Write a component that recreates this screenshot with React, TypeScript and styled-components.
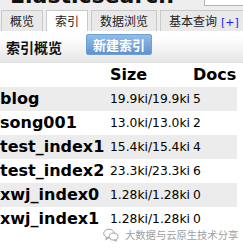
import styled, { createGlobalStyle } from "styled-components";

const GlobalStyle = createGlobalStyle`
  html, body {
    margin: 0;
    padding: 0;
    background: #ffffff;
    overflow: hidden;
  }
  body {
    font-family: "DejaVu Sans", "Noto Sans CJK SC", sans-serif;
    color: #000;
  }
`;

const indices = [
  { name: "blog", size: "19.9ki/19.9ki", docs: "5" },
  { name: "song001", size: "13.0ki/13.0ki", docs: "2" },
  { name: "test_index1", size: "15.4ki/15.4ki", docs: "4" },
  { name: "test_index2", size: "23.3ki/23.3ki", docs: "6" },
  { name: "xwj_index0", size: "1.28ki/1.28ki", docs: "0" },
  { name: "xwj_index1", size: "1.28ki/1.28ki", docs: "0" },
];

const tabs = [
  { label: "概览" },
  { label: "索引", active: true },
  { label: "数据浏览" },
  { label: "基本查询", extra: "[+]" },
];

export default function App() {
  return (
    <Page>
      <GlobalStyle />
      <Header>
        <TitleRow>
          <Title>Elasticsearch</Title>
          <Search />
        </TitleRow>
        <Tabs>
          {tabs.map((t) => (
            <Tab key={t.label} $active={t.active}>
              {t.label}
              {t.extra && <TabExtra>{t.extra}</TabExtra>}
            </Tab>
          ))}
        </Tabs>
      </Header>
      <Toolbar>
        <ToolbarTitle>索引概览</ToolbarTitle>
        <Button>新建索引</Button>
      </Toolbar>
      <Table>
        <HeadRow>
          <span />
          <HeadCell>Size</HeadCell>
          <HeadCell>Docs</HeadCell>
        </HeadRow>
        {indices.map((ix, i) => (
          <Row key={ix.name} $striped={i % 2 === 0}>
            <Name>{ix.name}</Name>
            <Cell>{ix.size}</Cell>
            <Cell>{ix.docs}</Cell>
          </Row>
        ))}
      </Table>
      <Watermark>
        <svg width="16" height="14" viewBox="0 0 16 14" fill="none" stroke="#a0a0a0" strokeWidth="1">
          <ellipse cx="6" cy="5.5" rx="5.3" ry="4.3" />
          <path d="M3.5 9.2 L2.8 11.6 L5.4 10" />
          <ellipse cx="10.6" cy="8.6" rx="4.4" ry="3.5" fill="#fff" />
          <path d="M12.6 11.7 L13.4 13.2 L11.2 12" />
        </svg>
        <WatermarkText>大数据与云原生技术分享</WatermarkText>
      </Watermark>
    </Page>
  );
}

const Page = styled.div`
  position: relative;
  width: 243px;
  height: 249px;
  overflow: hidden;
`;

const Header = styled.div`
  background: #eeeeee;
  display: flex;
  flex-direction: column;
`;

const TitleRow = styled.div`
  display: flex;
  align-items: flex-end;
  justify-content: space-between;
  margin-top: -17px;
  height: 25px;
`;

const Title = styled.div`
  font-family: "DejaVu Sans", sans-serif;
  font-weight: bold;
  font-size: 22px;
  line-height: 22px;
  padding-left: 10px;
  color: #111;
  margin-bottom: 1px;
`;

const Search = styled.div`
  width: 45px;
  height: 20px;
  margin-right: -8px;
  margin-bottom: 2px;
  background: #fff;
  border: 1px solid #b5b5b5;
`;

const Tabs = styled.div`
  display: flex;
  gap: 3px;
  padding-left: 1px;
  margin-top: 2px;
`;

const Tab = styled.div<{ $active?: boolean }>`
  font-family: "Noto Sans CJK SC", sans-serif;
  font-size: 12px;
  line-height: 20px;
  height: 20px;
  padding: 0 8px;
  color: #222;
  background: ${(p) => (p.$active ? "#ffffff" : "#e9e9e9")};
  border: 1px solid #c9c9c9;
  border-bottom: none;
  border-radius: 1px 1px 0 0;
  white-space: nowrap;
`;

const TabExtra = styled.span`
  color: #1a1aff;
  margin-left: 4px;
  font-family: "DejaVu Sans", sans-serif;
  font-size: 11px;
`;

const Toolbar = styled.div`
  height: 31px;
  display: flex;
  align-items: center;
  gap: 24px;
  padding-left: 6px;
  background: linear-gradient(#ffffff 20%, #e6e6e6);
  border-bottom: 1px solid #e0e0e0;
`;

const ToolbarTitle = styled.div`
  font-family: "Noto Sans CJK SC", sans-serif;
  font-weight: bold;
  font-size: 14px;
  color: #111;
`;

const Button = styled.div`
  font-family: "Noto Sans CJK SC", sans-serif;
  font-weight: bold;
  font-size: 13px;
  line-height: 19px;
  height: 19px;
  padding: 0 6px;
  margin-top: -4px;
  color: #fff;
  background: linear-gradient(#93bde9, #5f92cf);
  border: 1px solid #6f9fd4;
  border-radius: 2px;
`;

const Table = styled.div`
  width: 237px;
  display: flex;
  flex-direction: column;
`;

const HeadRow = styled.div`
  display: grid;
  grid-template-columns: 110px 83px 1fr;
  height: 24px;
  align-items: center;
`;

const HeadCell = styled.div`
  font-family: "DejaVu Sans", sans-serif;
  font-weight: bold;
  font-size: 16px;
  line-height: 24px;
`;

const Row = styled.div<{ $striped?: boolean }>`
  display: grid;
  grid-template-columns: 110px 83px 1fr;
  height: 24px;
  align-items: center;
  background: ${(p) => (p.$striped ? "#ececec" : "transparent")};
`;

const Name = styled.div`
  font-family: "DejaVu Sans", sans-serif;
  font-weight: bold;
  font-size: 16px;
  line-height: 24px;
  white-space: nowrap;
`;

const Cell = styled.div`
  font-family: "DejaVu Sans", sans-serif;
  font-size: 12.3px;
  line-height: 24px;
  white-space: nowrap;
`;

const Watermark = styled.div`
  position: absolute;
  left: 103px;
  top: 227px;
  display: flex;
  align-items: center;
  gap: 6px;
`;

const WatermarkText = styled.span`
  font-family: "Noto Sans CJK SC", sans-serif;
  font-size: 10.3px;
  color: #a0a0a0;
`;
